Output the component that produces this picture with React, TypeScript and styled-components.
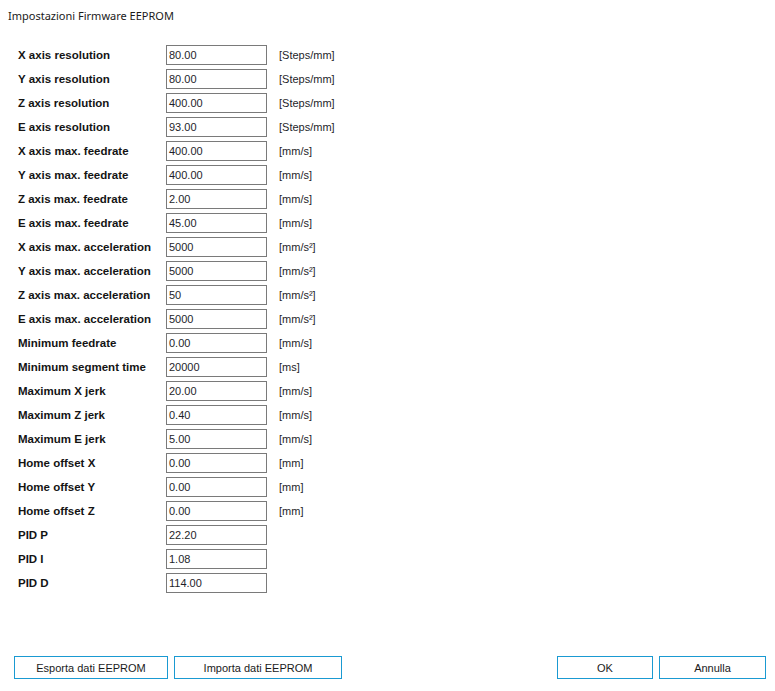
import React from "react";
import styled, { createGlobalStyle } from "styled-components";

interface IField {
  label: string;
  value: string;
  unit?: string;
}

const fields: IField[] = [
  { label: "X axis resolution", value: "80.00", unit: "[Steps/mm]" },
  { label: "Y axis resolution", value: "80.00", unit: "[Steps/mm]" },
  { label: "Z axis resolution", value: "400.00", unit: "[Steps/mm]" },
  { label: "E axis resolution", value: "93.00", unit: "[Steps/mm]" },
  { label: "X axis max. feedrate", value: "400.00", unit: "[mm/s]" },
  { label: "Y axis max. feedrate", value: "400.00", unit: "[mm/s]" },
  { label: "Z axis max. feedrate", value: "2.00", unit: "[mm/s]" },
  { label: "E axis max. feedrate", value: "45.00", unit: "[mm/s]" },
  { label: "X axis max. acceleration", value: "5000", unit: "[mm/s²]" },
  { label: "Y axis max. acceleration", value: "5000", unit: "[mm/s²]" },
  { label: "Z axis max. acceleration", value: "50", unit: "[mm/s²]" },
  { label: "E axis max. acceleration", value: "5000", unit: "[mm/s²]" },
  { label: "Minimum feedrate", value: "0.00", unit: "[mm/s]" },
  { label: "Minimum segment time", value: "20000", unit: "[ms]" },
  { label: "Maximum X jerk", value: "20.00", unit: "[mm/s]" },
  { label: "Maximum Z jerk", value: "0.40", unit: "[mm/s]" },
  { label: "Maximum E jerk", value: "5.00", unit: "[mm/s]" },
  { label: "Home offset X", value: "0.00", unit: "[mm]" },
  { label: "Home offset Y", value: "0.00", unit: "[mm]" },
  { label: "Home offset Z", value: "0.00", unit: "[mm]" },
  { label: "PID P", value: "22.20" },
  { label: "PID I", value: "1.08" },
  { label: "PID D", value: "114.00" },
];

const App: React.FC = () => {
  return (
    <Window>
      <GlobalStyle />
      <Title>Impostazioni Firmware EEPROM</Title>
      <Form>
        {fields.map((f) => (
          <React.Fragment key={f.label}>
            <Label>{f.label}</Label>
            <ValueBox>{f.value}</ValueBox>
            <Unit>{f.unit || ""}</Unit>
          </React.Fragment>
        ))}
      </Form>
      <Footer>
        <Group>
          <Button $w={154}>Esporta dati EEPROM</Button>
          <Button $w={168}>Importa dati EEPROM</Button>
        </Group>
        <Group>
          <Button $w={96}>OK</Button>
          <Button $w={107}>Annulla</Button>
        </Group>
      </Footer>
    </Window>
  );
};

export default App;

const GlobalStyle = createGlobalStyle`
  html, body {
    margin: 0;
    padding: 0;
    background: #fff;
  }
`;

const Window = styled.div`
  width: 775px;
  height: 691px;
  display: flex;
  flex-direction: column;
  background: #fff;
  font-family: "Liberation Sans", Arial, sans-serif;
  color: #1a1a1a;
`;

const Title = styled.div`
  font-family: "Noto Sans", "Open Sans", sans-serif;
  font-size: 11px;
  line-height: 16px;
  padding: 8px 0 0 8px;
  color: #1a1a1a;
`;

const Form = styled.div`
  display: grid;
  grid-template-columns: 148px 101px auto;
  grid-auto-rows: 20px;
  row-gap: 4px;
  align-items: center;
  margin: 21px 0 0 18px;
`;

const Label = styled.div`
  font-weight: bold;
  font-size: 11.5px;
  color: #141414;
  white-space: nowrap;
`;

const ValueBox = styled.div`
  box-sizing: border-box;
  height: 20px;
  border: 1px solid #7a7a7a;
  padding: 0 2px;
  font-size: 11px;
  line-height: 18px;
  color: #1e1e2a;
`;

const Unit = styled.div`
  font-size: 11px;
  padding-left: 12px;
  color: #1e1e2a;
`;

const Footer = styled.div`
  margin-top: auto;
  display: flex;
  justify-content: space-between;
  padding: 0 9px 12px 14px;
`;

const Group = styled.div`
  display: flex;
  gap: 6px;
`;

const Button = styled.div<{ $w: number }>`
  box-sizing: border-box;
  width: ${(p) => p.$w}px;
  height: 23px;
  border: 1px solid #1a9ad2;
  background: #fff;
  display: flex;
  align-items: center;
  justify-content: center;
  font-size: 11px;
  color: #1a1a1a;
`;
